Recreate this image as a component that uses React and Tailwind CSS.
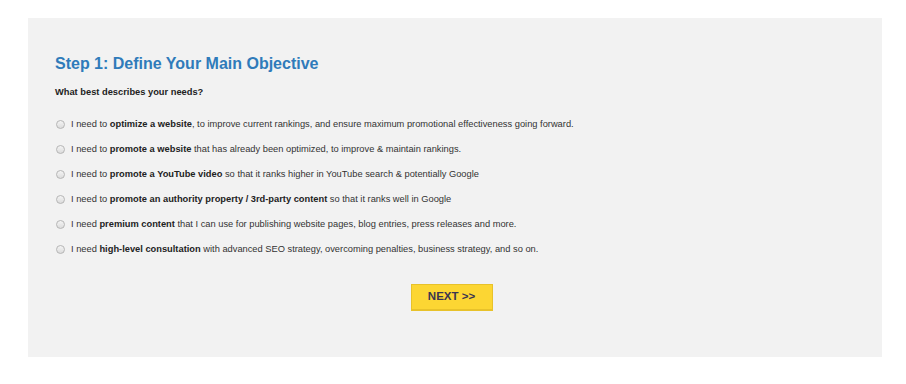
import React from 'react';

const options = [
    { pre: 'I need to ', bold: 'optimize a website', post: ', to improve current rankings, and ensure maximum promotional effectiveness going forward.' },
    { pre: 'I need to ', bold: 'promote a website', post: ' that has already been optimized, to improve & maintain rankings.' },
    { pre: 'I need to ', bold: 'promote a YouTube video', post: ' so that it ranks higher in YouTube search & potentially Google' },
    { pre: 'I need to ', bold: 'promote an authority property / 3rd-party content', post: ' so that it ranks well in Google' },
    { pre: 'I need ', bold: 'premium content', post: ' that I can use for publishing website pages, blog entries, press releases and more.' },
    { pre: 'I need ', bold: 'high-level consultation', post: ' with advanced SEO strategy, overcoming penalties, business strategy, and so on.' },
];

export default function App() {
    var rows = options.map((opt, i) => (
        <label key={i} className="flex items-center h-[25px] cursor-pointer">
            <span className="w-[9px] h-[9px] rounded-full border border-[#b5b5b5] bg-gradient-to-b from-[#f4f4f4] to-[#dcdcdc] ml-[1px] mr-[6px] mt-[-1px] shrink-0" />
            <span className="text-[9.3px] text-[#333]">
                {opt.pre}<b className="font-bold text-[#222]">{opt.bold}</b>{opt.post}
            </span>
        </label>
    ));

    return (
        <div className="bg-white w-[906px] h-[384px] pt-[18px] pl-[28px]" style={{ fontFamily: '"Liberation Sans", Arial, sans-serif' }}>
            <div className="w-[854px] h-[339px] bg-[#f2f2f2] pl-[27px] pt-[36px]">
                <h2 className="text-[16px] leading-[20px] font-bold text-[#2f7bba]">Step 1: Define Your Main Objective</h2>
                <p className="mt-[12px] text-[9.3px] font-bold text-[#222]">What best describes your needs?</p>
                <div className="mt-[13px] flex flex-col">
                    {rows}
                </div>
                <div className="flex justify-center pr-[27px] mt-[21px]">
                    <button className="mr-[7px] w-[82px] h-[27px] bg-[#fcd633] border border-[#e8c22a] border-b-2 text-[11.5px] font-bold text-[#3a3450]">
                        NEXT &gt;&gt;
                    </button>
                </div>
            </div>
        </div>
    );
}
